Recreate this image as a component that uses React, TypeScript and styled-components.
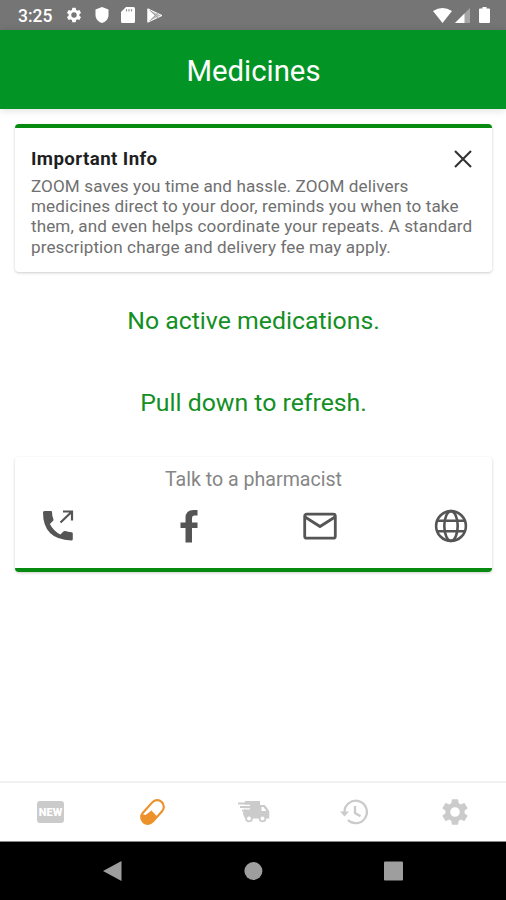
import React from "react";
import styled, { createGlobalStyle } from "styled-components";

const GlobalStyle = createGlobalStyle`
  * { box-sizing: border-box; }
  body { margin: 0; background: #fff; }
`;

const Screen = styled.div`
  width: 506px;
  height: 900px;
  display: flex;
  flex-direction: column;
  overflow: hidden;
  background: #fff;
  font-family: Roboto, "Liberation Sans", sans-serif;
`;

const StatusBar = styled.div`
  height: 30px;
  flex: none;
  background: #757575;
  display: flex;
  align-items: center;
  padding: 0 16px 0 18px;
  color: #fff;
`;

const Clock = styled.span`
  width: 47px;
  font-size: 17.5px;
  font-weight: 500;
  line-height: 30px;
  padding-top: 2px;
`;

const StatusIcons = styled.div<{ $gap: number; $end?: boolean }>`
  display: flex;
  align-items: center;
  gap: ${(p) => p.$gap}px;
  margin-left: ${(p) => (p.$end ? "auto" : "0")};
`;

const Header = styled.header`
  height: 79px;
  flex: none;
  background: #029525;
  color: #fff;
  display: flex;
  align-items: center;
  justify-content: center;
  padding: 2px 0 0 1px;
  box-shadow: 0 1px 8px rgba(0, 0, 0, 0.14);
`;

const Title = styled.h1`
  margin: 0;
  font-size: 29.3px;
  font-weight: 400;
  line-height: 34px;
`;

const Content = styled.main`
  flex: 1;
  display: flex;
  flex-direction: column;
  padding: 15px 14px 0 15px;
`;

const Card = styled.section<{ $edge: "top" | "bottom"; $height: number }>`
  height: ${(p) => p.$height}px;
  border-radius: 4px;
  border-${(p) => p.$edge}: 4px solid #078a10;
  background: #fff;
  box-shadow: 0 1px 3px rgba(0, 0, 0, 0.2);
`;

const InfoHead = styled.div`
  display: flex;
  justify-content: space-between;
  align-items: center;
  height: 24px;
  margin: 19px 20px 0 16px;
`;

const InfoTitle = styled.h2`
  margin: 0;
  color: #1f1f1f;
  font-size: 18.7px;
  font-weight: 700;
  line-height: 24px;
  letter-spacing: 0.4px;
`;

const InfoText = styled.p`
  margin: 5px 0 0 16px;
  font-size: 17.1px;
  font-weight: 400;
  line-height: 20.2px;
  letter-spacing: 0.1px;
  color: #707070;
  white-space: nowrap;
`;

const Notice = styled.p<{ $top: number }>`
  margin: ${(p) => p.$top}px 0 0;
  text-align: center;
  color: #138f24;
  font-size: 24.8px;
  font-weight: 400;
  line-height: 30px;
`;

const ContactCard = styled(Card)`
  margin-top: 39px;
`;

const ContactTitle = styled.div`
  padding-top: 11px;
  text-align: center;
  font-size: 19.6px;
  font-weight: 400;
  line-height: 24px;
  color: #868686;
`;

const ContactRow = styled.div`
  display: flex;
  justify-content: space-between;
  align-items: center;
  padding: 15px 22px 0 24px;
  color: #555;
`;

const Tabs = styled.nav`
  height: 61px;
  flex: none;
  border-top: 2px solid #f1f1f1;
  border-bottom: 1px solid #888;
  padding-bottom: 1px;
  display: grid;
  grid-template-columns: repeat(5, 1fr);
  place-items: center;
  color: #cbcbcb;
`;

const NewBadge = styled.span`
  width: 27px;
  height: 22px;
  border-radius: 3px;
  background: #cbcbcb;
  color: #fff;
  font-size: 11px;
  font-weight: 900;
  line-height: 23px;
  text-align: center;
`;

const NavBar = styled.div`
  height: 58px;
  flex: none;
  background: #000;
  display: flex;
  justify-content: center;
  align-items: center;
  gap: 120px;
`;

const Icon = styled.svg`
  display: block;
  flex: none;
  overflow: visible;
`;

const GEAR =
  "M19.14 12.94c.04-.3.06-.61.06-.94 0-.32-.02-.64-.07-.94l2.03-1.58a.49.49 0 0 0 .12-.61l-1.92-3.32a.49.49 0 0 0-.59-.22l-2.39.96c-.5-.38-1.03-.7-1.62-.94l-.36-2.54a.48.48 0 0 0-.48-.41h-3.84a.47.47 0 0 0-.47.41l-.36 2.54c-.59.24-1.13.57-1.62.94l-2.39-.96a.47.47 0 0 0-.59.22L2.74 8.87a.47.47 0 0 0 .12.61l2.03 1.58c-.05.3-.09.63-.09.94s.02.64.07.94l-2.03 1.58a.49.49 0 0 0-.12.61l1.92 3.32c.12.22.37.29.59.22l2.39-.96c.5.38 1.03.7 1.62.94l.36 2.54c.05.24.24.41.48.41h3.84c.24 0 .44-.17.47-.41l.36-2.54c.59-.24 1.13-.56 1.62-.94l2.39.96c.22.08.47 0 .59-.22l1.92-3.32a.47.47 0 0 0-.12-.61zM12 15.6a3.6 3.6 0 1 1 0-7.2 3.6 3.6 0 0 1 0 7.2z";

const Gear = ({ size }: { size: number }) => (
  <Icon width={size} height={size} viewBox="0 0 24 24" fill="currentColor">
    <path d={GEAR} />
  </Icon>
);

export default function App() {
  return (
    <>
      <GlobalStyle />
      <Screen>
        <StatusBar>
          <Clock>3:25</Clock>
          <StatusIcons $gap={12}>
            <Gear size={18} />
            <Icon width="14" height="16" viewBox="0 0 14 16" fill="#fff">
              <path d="M7 0 13.500 2.500V8c0 4-3 7-6.500 8C3.500 15 .5 12 .5 8V2.500z" />
            </Icon>
            <Icon width="14" height="16" viewBox="0 0 14 16">
              <path d="M5 0h7.500Q14 0 14 1.500v13q0 1.500-1.500 1.500h-11Q0 16 0 14.500V5z" fill="#fff" />
              <path d="M5.500 2v2.500M8 2v2.500M10.500 2v2.500" stroke="#999" strokeWidth="1.200" />
            </Icon>
            <Icon width="16" height="15" viewBox="0 0 16 15">
              <path d="M.8.800 15 7.500.8 14.200z" fill="#bdbdbd" stroke="#fff" strokeWidth="1" strokeLinejoin="round" />
              <path d="M1 1v13l6.500-6.500z" fill="#fff" />
              <path d="m3 2 8 8M3 13l8-8" stroke="#999" strokeWidth=".7" />
            </Icon>
          </StatusIcons>
          <StatusIcons $gap={3} $end>
            <Icon width="19" height="15" viewBox="0 0 20 15" preserveAspectRatio="none">
              <path d="M0 3Q10-3 20 3L10 15z" fill="#fff" />
            </Icon>
            <Icon width="15" height="15" viewBox="0 0 15 15">
              <path d="M0 15 15 0v15z" fill="#a5a5a5" />
              <path d="M0 15 9.500 5.500V15z" fill="#fff" />
            </Icon>
            <Icon width="17" height="16" viewBox="1 0 17 16">
              <path d="M10.500 0h4v1.500H17q1 0 1 1V15q0 1-1 1H8q-1 0-1-1V2.500q0-1 1-1h2.500z" fill="#fff" />
            </Icon>
          </StatusIcons>
        </StatusBar>

        <Header>
          <Title>Medicines</Title>
        </Header>

        <Content>
          <Card $edge="top" $height={148}>
            <InfoHead>
              <InfoTitle>Important Info</InfoTitle>
              <Icon width="18" height="18" viewBox="0 0 18 18" stroke="#333" strokeWidth="2.100">
                <path d="m1 1 16 16M17 1 1 17" />
              </Icon>
            </InfoHead>
            <InfoText>
              ZOOM saves you time and hassle. ZOOM delivers
              <br />
              medicines direct to your door, reminds you when to take
              <br />
              them, and even helps coordinate your repeats. A standard
              <br />
              prescription charge and delivery fee may apply.
            </InfoText>
          </Card>

          <Notice $top={34}>No active medications.</Notice>
          <Notice $top={52}>Pull down to refresh.</Notice>

          <ContactCard $edge="bottom" $height={115}>
            <ContactTitle>Talk to a pharmacist</ContactTitle>
            <ContactRow>
              <Icon width="38" height="38" viewBox="0 0 38 38" fill="currentColor">
                <path d="M5.500 4H12q1 0 1 1 0 4 1.500 7.500 0 1-.6 1.500l-3 3q3.500 7 10.500 10.500l3-3q.7-.8 1.800-.5 3 1 6.200 1.200 1.400 0 1.400 1.300V32q0 1.500-1.500 1.500Q4 32.500 4 5.500 4 4 5.500 4z" />
                <path d="M21.500 15.500 33 4.500M24 4.500h9v9" fill="none" stroke="currentColor" strokeWidth="2.200" />
              </Icon>
              <Icon width="38" height="38" viewBox="0 0 38 38" fill="currentColor">
                <path d="M27.500 3v5.500H24q-2 0-2 2.500v4.500h5.500V21H22v14.500h-6.500V21h-5v-5.500h5V11q0-8 8-8z" />
              </Icon>
              <Icon width="38" height="38" viewBox="0 0 38 38" fill="none" stroke="currentColor" strokeWidth="2.800">
                <rect x="3.700" y="7.200" width="30.600" height="24" rx="2" />
                <path d="m4 10 15 9.500L34 10" />
              </Icon>
              <Icon width="38" height="38" viewBox="0 0 38 38" fill="none" stroke="currentColor" strokeWidth="2.600">
                <circle cx="19" cy="19" r="14.900" />
                <ellipse cx="19" cy="19" rx="6.700" ry="14.900" />
                <path d="M5.500 13.800h27M5.500 24.200h27" />
              </Icon>
            </ContactRow>
          </ContactCard>
        </Content>

        <Tabs>
          <NewBadge>NEW</NewBadge>
          <Icon width="28" height="28" viewBox="0 0 28 28">
            <clipPath id="capsule">
              <rect x="-6.600" y="-13.600" width="13.200" height="27.200" rx="6.600" transform="translate(14.500 14) rotate(42)" />
            </clipPath>
            <path d="M0 15.500 7.500 17 13.500 12.500 19 18.500 12 28H0z" fill="#ed912b" clipPath="url(#capsule)" />
            <rect
              x="-6.600"
              y="-13.600"
              width="13.200"
              height="27.200"
              rx="6.600"
              transform="translate(14.500 14) rotate(42)"
              fill="none"
              stroke="#ed912b"
              strokeWidth="2.200"
            />
          </Icon>
          <Icon width="32" height="22" viewBox="0 0 32 22" fill="currentColor">
            <path d="M8 0h15v4h4q1 0 1.700 1l2.800 4q.8 1 .8 2v6.500H8L6 13z" />
            <path d="M0 4.300h13M3 7.800h10" stroke="#fff" strokeWidth="1.300" />
            <path d="M1 2.500h8M3 6h7M5 9.700h4" stroke="currentColor" strokeWidth="1.800" />
            <path d="M24.500 6h2l2.800 4h-4.800z" fill="#fff" />
            <circle cx="12" cy="17.500" r="2.900" fill="#fff" stroke="currentColor" strokeWidth="1.800" />
            <circle cx="25.500" cy="17.500" r="2.900" fill="#fff" stroke="currentColor" strokeWidth="1.800" />
          </Icon>
          <Icon width="28" height="26" viewBox="0 0 28 26" fill="none" stroke="currentColor" strokeWidth="2.300">
            <path d="M4.500 13a11.200 11.200 0 1 1 3.400 8" />
            <path d="M0 12.500h9l-4.500 5z" fill="currentColor" stroke="none" />
            <path d="M15 7v7l5.500 3.300" />
          </Icon>
          <Gear size={32} />
        </Tabs>

        <NavBar>
          <Icon width="20" height="22" viewBox="0 0 20 22">
            <path d="M0 11 18.500 1v20z" fill="#9e9e9e" />
          </Icon>
          <Icon width="20" height="20" viewBox="0 0 20 20">
            <circle cx="10.400" cy="10" r="9" fill="#9e9e9e" />
          </Icon>
          <Icon width="20" height="20" viewBox="0 0 20 20">
            <rect x="1" y=".5" width="19" height="19" rx="1" fill="#9e9e9e" />
          </Icon>
        </NavBar>
      </Screen>
    </>
  );
}
